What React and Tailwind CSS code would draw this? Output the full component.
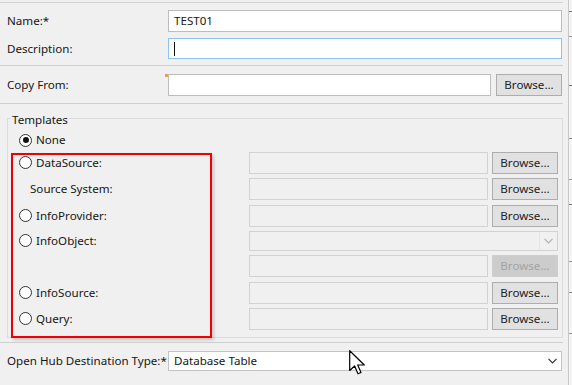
import React from 'react';

const Browse = ({ disabled }) => (
  <button
    className={
      disabled
        ? 'h-[22px] w-[66px] border border-[#cfcfcf] bg-[#cccccc] text-[#a3a3a3] leading-none'
        : 'h-[22px] w-[66px] border border-[#adadad] bg-[#e1e1e1] text-[#222] leading-none'
    }
  >
    Browse...
  </button>
);

const Radio = ({ checked }) => (
  <span className="h-[13px] w-[13px] shrink-0 rounded-full border border-[#333] bg-white flex items-center justify-center">
    {checked && <span className="h-[6px] w-[6px] rounded-full bg-[#111]" />}
  </span>
);

const Chevron = ({ color }) => (
  <svg width="9" height="6" viewBox="0 0 9 6" fill="none">
    <path d="M0.5 0.8 L4.5 4.8 L8.5 0.8" stroke={color} strokeWidth="1.2" />
  </svg>
);

const EmptyField = () => (
  <div className="h-[22px] w-[239px] border border-[#d2d2d2] bg-[#f0f0f0]" />
);

const TemplateRow = ({ label, radio, indent, disabledBrowse, mt }) => (
  <div className={`flex items-center h-[22px] ${mt}`}>
    <div className="w-[241px] flex items-center pl-[11px]">
      {radio ? (
        <>
          <Radio />
          <span className="ml-[4px]">{label}</span>
        </>
      ) : (
        <span className={indent ? 'pl-[11px]' : ''}>{label}</span>
      )}
    </div>
    <EmptyField />
    <div className="ml-[4px]">
      <Browse disabled={disabledBrowse} />
    </div>
  </div>
);

export default function App() {
  return (
    <div
      className="relative w-[572px] h-[385px] overflow-hidden bg-[#f0f0f0] text-[11.6px] text-[#161616] flex"
      style={{ fontFamily: '"Noto Sans", "Open Sans", sans-serif' }}
    >
      <div className="w-[563px] shrink-0 flex flex-col">
        <div className="mt-[2px] h-px bg-[#d3d3d3]" />

        {/* Name */}
        <div className="mt-[7px] flex items-center h-[22px]">
          <span className="w-[168px] pl-[7px]">Name:*</span>
          <div className="h-[22px] w-[394px] border border-[#bdbdbd] bg-white flex items-center pl-[5px]">
            TEST01
          </div>
        </div>

        {/* Description */}
        <div className="mt-[6px] flex items-center h-[21px]">
          <span className="w-[168px] pl-[7px]">Description:</span>
          <div className="h-[21px] w-[394px] border border-[#8cc3ef] bg-white flex items-center pl-[5px]">
            <span className="h-[14px] w-px bg-[#111]" />
          </div>
        </div>

        <div className="mt-[6px] h-px bg-[#cfcfcf]" />

        {/* Copy From */}
        <div className="mt-[8px] flex items-center h-[22px]">
          <span className="w-[168px] pl-[7px]">Copy From:</span>
          <div className="relative h-[22px] w-[323px] border border-[#bdbdbd] bg-white">
            <span className="absolute -left-[4px] -top-[1px] h-[3px] w-[3px] bg-[#f0a040]" />
          </div>
          <div className="ml-[5px]">
            <Browse />
          </div>
        </div>

        <div className="mt-[7px] h-px bg-[#cfcfcf]" />

        {/* Templates group */}
        <div className="relative mt-[14px] ml-[7px] h-[220px] w-[556px] border border-[#dcdcdc]">
          <span className="absolute left-[3px] -top-[7px] px-[1px] bg-[#f0f0f0] leading-[16px]">
            Templates
          </span>

          <div className="flex items-center h-[16px] pl-[11px] mt-[13px]">
            <Radio checked />
            <span className="ml-[4px]">None</span>
          </div>

          <TemplateRow label="DataSource:" radio mt="mt-[4px]" />
          <TemplateRow label="Source System:" indent mt="mt-[4px]" />
          <TemplateRow label="InfoProvider:" radio mt="mt-[5px]" />

          <div className="flex items-center h-[20px] mt-[4px]">
            <div className="w-[241px] flex items-center pl-[11px]">
              <Radio />
              <span className="ml-[4px]">InfoObject:</span>
            </div>
            <div className="h-[20px] w-[309px] border border-[#d2d2d2] bg-[#f0f0f0] flex justify-end">
              <div className="w-[18px] border-l border-[#e4e4e4] flex items-center justify-center">
                <Chevron color="#b0b0b0" />
              </div>
            </div>
          </div>

          <TemplateRow label="" mt="mt-[4px]" disabledBrowse />
          <TemplateRow label="InfoSource:" radio mt="mt-[5px]" />
          <TemplateRow label="Query:" radio mt="mt-[4px]" />

          {/* annotation box */}
          <div className="absolute left-[3px] top-[34px] h-[185px] w-[201px] border-2 border-[#f00000] shadow-[2px_2px_3px_rgba(0,0,0,0.18)]" />
        </div>

        <div className="mt-[4px] h-px bg-[#cfcfcf]" />

        {/* Open Hub Destination Type */}
        <div className="mt-[8px] flex items-center h-[20px]">
          <span className="w-[168px] pl-[7px] whitespace-nowrap">Open Hub Destination Type:*</span>
          <div className="h-[20px] w-[394px] border border-[#c4c4c4] bg-white flex items-center">
            <span className="flex-1 pl-[5px]">Database Table</span>
            <div className="w-[18px] flex items-center justify-center">
              <Chevron color="#333" />
            </div>
          </div>
        </div>
      </div>

      {/* neighbouring panel edge */}
      <div className="ml-[5px] h-full w-[4px] border-l border-[#c8c8c8] bg-[#f4f4f4] flex flex-col">
        <span className="mt-[11px] h-px w-[3px] bg-[#777]" />
        <span className="mt-[24px] h-px w-[3px] bg-[#999]" />
        <span className="mt-[48px] h-px w-[3px] bg-[#777]" />
        <span className="mt-[52px] h-px w-[3px] bg-[#888]" />
        <span className="mt-[40px] h-px w-[3px] bg-[#999]" />
        <span className="mt-[24px] h-px w-[3px] bg-[#777]" />
        <span className="mt-[56px] h-px w-[3px] bg-[#999]" />
        <span className="mt-[30px] h-px w-[3px] bg-[#888]" />
        <span className="mt-[40px] h-px w-[3px] bg-[#999]" />
      </div>

      {/* mouse cursor */}
      <svg
        className="absolute left-[349px] top-[350px]"
        width="17"
        height="26"
        viewBox="0 0 17 26"
      >
        <path
          d="M0.7 0.7 L0.7 20.5 L5.6 16 L9 23.8 L12 22.5 L8.7 15 L15.3 15 Z"
          fill="#fff"
          stroke="#000"
          strokeWidth="1.2"
          strokeLinejoin="round"
        />
      </svg>
    </div>
  );
}
